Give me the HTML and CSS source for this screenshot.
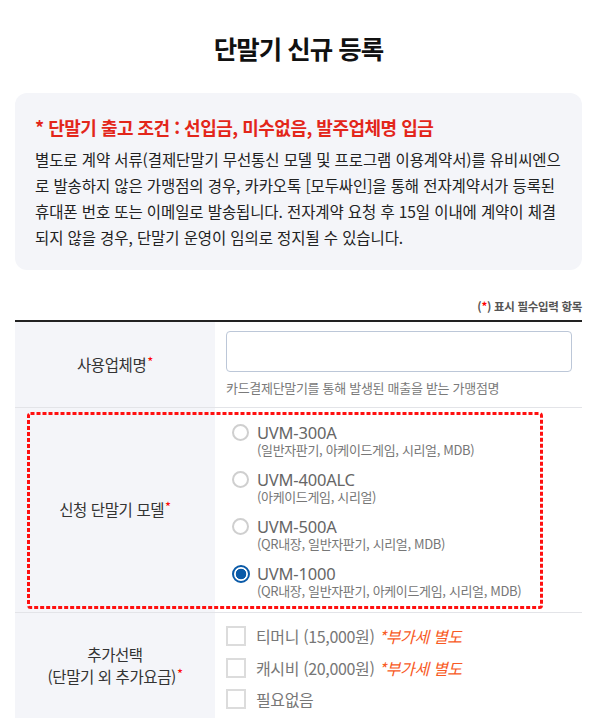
FILE: index.html
```html
<!DOCTYPE html>
<html lang="ko">
<head>
<meta charset="utf-8">
<link rel="stylesheet" href="styles.css">
</head>
<body>
<div class="page">
  <h1 class="title">단말기 신규 등록</h1>
  <div class="notice">
    <p class="notice-head">* 단말기 출고 조건 : 선입금, 미수없음, 발주업체명 입금</p>
    <p class="notice-body">별도로 계약 서류(결제단말기 무선통신 모델 및 프로그램 이용계약서)를 유비씨엔으로 발송하지 않은 가맹점의 경우, 카카오톡 [모두싸인]을 통해 전자계약서가 등록된 휴대폰 번호 또는 이메일로 발송됩니다. 전자계약 요청 후 15일 이내에 계약이 체결되지 않을 경우, 단말기 운영이 임의로 정지될 수 있습니다.</p>
  </div>
  <div class="req-note">(<span class="star">*</span>) 표시 필수입력 항목</div>
  <div class="form">
    <div class="row row-name">
      <div class="label"><span class="ltext">사용업체명<span class="star">*</span></span></div>
      <div class="value">
        <input class="text-input" type="text">
        <div class="help">카드결제단말기를 통해 발생된 매출을 받는 가맹점명</div>
      </div>
    </div>
    <div class="row row-model">
      <div class="label"><span class="ltext">신청 단말기 모델<span class="star">*</span></span></div>
      <div class="value radios">
        <label class="radio">
          <span class="dot"></span>
          <span class="rtext"><span class="rname">UVM-300A</span><span class="rsub">(일반자판기, 아케이드게임, 시리얼, MDB)</span></span>
        </label>
        <label class="radio">
          <span class="dot"></span>
          <span class="rtext"><span class="rname">UVM-400ALC</span><span class="rsub">(아케이드게임, 시리얼)</span></span>
        </label>
        <label class="radio">
          <span class="dot"></span>
          <span class="rtext"><span class="rname">UVM-500A</span><span class="rsub">(QR내장, 일반자판기, 시리얼, MDB)</span></span>
        </label>
        <label class="radio checked">
          <span class="dot"></span>
          <span class="rtext"><span class="rname">UVM-1000</span><span class="rsub">(QR내장, 일반자판기, 아케이드게임, 시리얼, MDB)</span></span>
        </label>
      </div>
      <svg class="highlight" width="516" height="197" viewBox="0 0 516 197"><rect x="1.5" y="1.5" width="513" height="194" rx="2" fill="none" stroke="#ff1010" stroke-width="3" stroke-dasharray="4 2"/></svg>
    </div>
    <div class="row row-extra">
      <div class="label"><span class="ltext">추가선택<br>(단말기 외 추가요금)<span class="star">*</span></span></div>
      <div class="value checks">
        <label class="check"><span class="box"></span>티머니 (15,000원) <em class="vat">*부가세 별도</em></label>
        <label class="check"><span class="box"></span>캐시비 (20,000원) <em class="vat">*부가세 별도</em></label>
        <label class="check"><span class="box"></span>필요없음</label>
      </div>
    </div>
  </div>
</div>
</body>
</html>
```
FILE: styles.css
```css
* { box-sizing: border-box; }
html, body { margin: 0; padding: 0; background: #fff; }
body {
  font-family: "Noto Sans CJK KR", "Noto Sans", sans-serif;
  color: #222;
}
.page { padding: 0 15px; }
.title {
  margin: 0;
  padding-top: 30px;
  font-size: 25.5px;
  line-height: 36px;
  font-weight: 700;
  text-align: center;
  letter-spacing: -1px;
  color: #111;
}
.notice {
  margin-top: 27px;
  background: #f4f5f9;
  border-radius: 12px;
  padding: 22px 17px 20px 20px;
}
.notice p { margin: 0; }
.notice-head {
  color: #e3261a;
  font-size: 18px;
  font-weight: 700;
  line-height: 24px;
  letter-spacing: -0.5px;
}
.notice-body {
  margin-top: 7px !important;
  font-size: 15.5px;
  line-height: 26px;
  letter-spacing: -0.1px;
  word-break: break-all;
  color: #222;
}
.req-note {
  margin-top: 28px;
  text-align: right;
  font-size: 11.5px;
  line-height: 16px;
  font-weight: 700;
  color: #555;
  letter-spacing: -0.3px;
}
.star { color: #f00; }
.form {
  margin-top: 6px;
  border-top: 2px solid #222;
}
.row {
  display: flex;
  border-bottom: 1px solid #e3e4e8;
  position: relative;
}
.label {
  width: 200px;
  flex: none;
  background: #f4f5f9;
  display: flex;
  align-items: center;
  justify-content: center;
  text-align: center;
  font-size: 15.5px;
  line-height: 22px;
  color: #333;
  letter-spacing: -0.4px;
}
.ltext { display: block; }
.label .star {
  font-size: 13px;
  margin-left: 1px;
  position: relative;
  top: -4px;
}
.value {
  flex: 1;
  padding: 9px 10px 9px 11px;
}
.text-input {
  display: block;
  width: 100%;
  height: 41px;
  border: 1px solid #bcc7d8;
  border-radius: 4px;
  background: #fff;
  margin: 0;
}
.help {
  margin-top: 6px;
  font-size: 13px;
  line-height: 20px;
  color: #7a7a7a;
  letter-spacing: -0.3px;
}
.radios {
  padding: 15px 10px 13px 17px;
  display: flex;
  flex-direction: column;
  gap: 12px;
}
.radio { display: flex; align-items: flex-start; gap: 8px; }
.dot {
  width: 17px;
  height: 17px;
  border: 2px solid #cfcfcf;
  border-radius: 50%;
  margin-top: 1px;
  flex: none;
  background: #fff;
}
.radio.checked .dot {
  width: 18px;
  height: 18px;
  margin-top: 0.5px;
  margin-left: -0.5px;
  margin-right: -0.5px;
  border: 2px solid #0a5aa8;
  background: radial-gradient(circle, #0a5aa8 0 5px, #fff 5.6px);
}
.rtext { display: flex; flex-direction: column; }
.rname {
  font-family: "Noto Sans", "Noto Sans CJK KR", sans-serif;
  font-size: 16.5px;
  line-height: 19px;
  color: #666;
  letter-spacing: -0.2px;
}
.rsub {
  font-size: 13px;
  line-height: 16px;
  color: #777;
  letter-spacing: -0.35px;
}
.highlight {
  position: absolute;
  left: 12px;
  top: 4px;
  pointer-events: none;
}
.checks {
  padding: 13px 10px 10px 11px;
  display: flex;
  flex-direction: column;
  gap: 11.5px;
}
.check {
  display: flex;
  align-items: center;
  font-size: 16px;
  line-height: 20px;
  color: #777;
  letter-spacing: -0.35px;
  white-space: pre;
}
.box {
  width: 20px;
  height: 20px;
  border: 2px solid #dcdcdc;
  background: #fff;
  margin-right: 10px;
  flex: none;
}
.vat {
  color: #f85a24;
  font-style: italic;
}
```
